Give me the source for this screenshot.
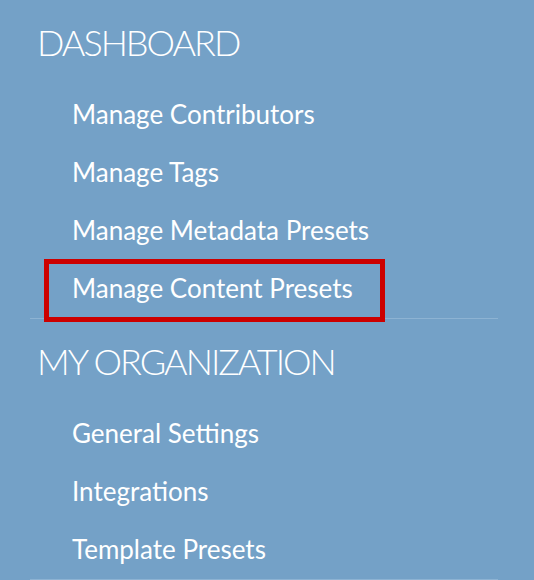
const sections = [
  {
    title: "DASHBOARD",
    items: [
      "Manage Contributors",
      "Manage Tags",
      "Manage Metadata Presets",
      "Manage Content Presets",
    ],
  },
  {
    title: "MY ORGANIZATION",
    items: ["General Settings", "Integrations", "Template Presets"],
  },
];

export default function App() {
  return (
    <main
      className="h-[580px] w-full overflow-hidden bg-[#74a1c7] text-white"
      style={{ fontFamily: "Lato, 'Open Sans', sans-serif" }}
    >
      {sections.map((section) => (
        <section key={section.title} className="pt-[15px]">
          <h2 className="pl-[37px] text-[36px] font-light leading-[54px] tracking-[-2px]">
            {section.title}
          </h2>
          <ul className="pt-[16px] pr-[36px]">
            {section.items.map((item) => (
              <li key={item} className="relative h-[58px] pl-[72px] text-[26px] leading-[58px]">
                {item}
                {item === "Manage Content Presets" && (
                  <span className="absolute left-[44px] top-0 h-[63px] w-[341px] border-[5px] border-[#cc0000]" />
                )}
              </li>
            ))}
          </ul>
          <div className="ml-[30px] mr-[36px] mt-px h-px bg-[#8db3d3]" />
        </section>
      ))}
    </main>
  );
}
